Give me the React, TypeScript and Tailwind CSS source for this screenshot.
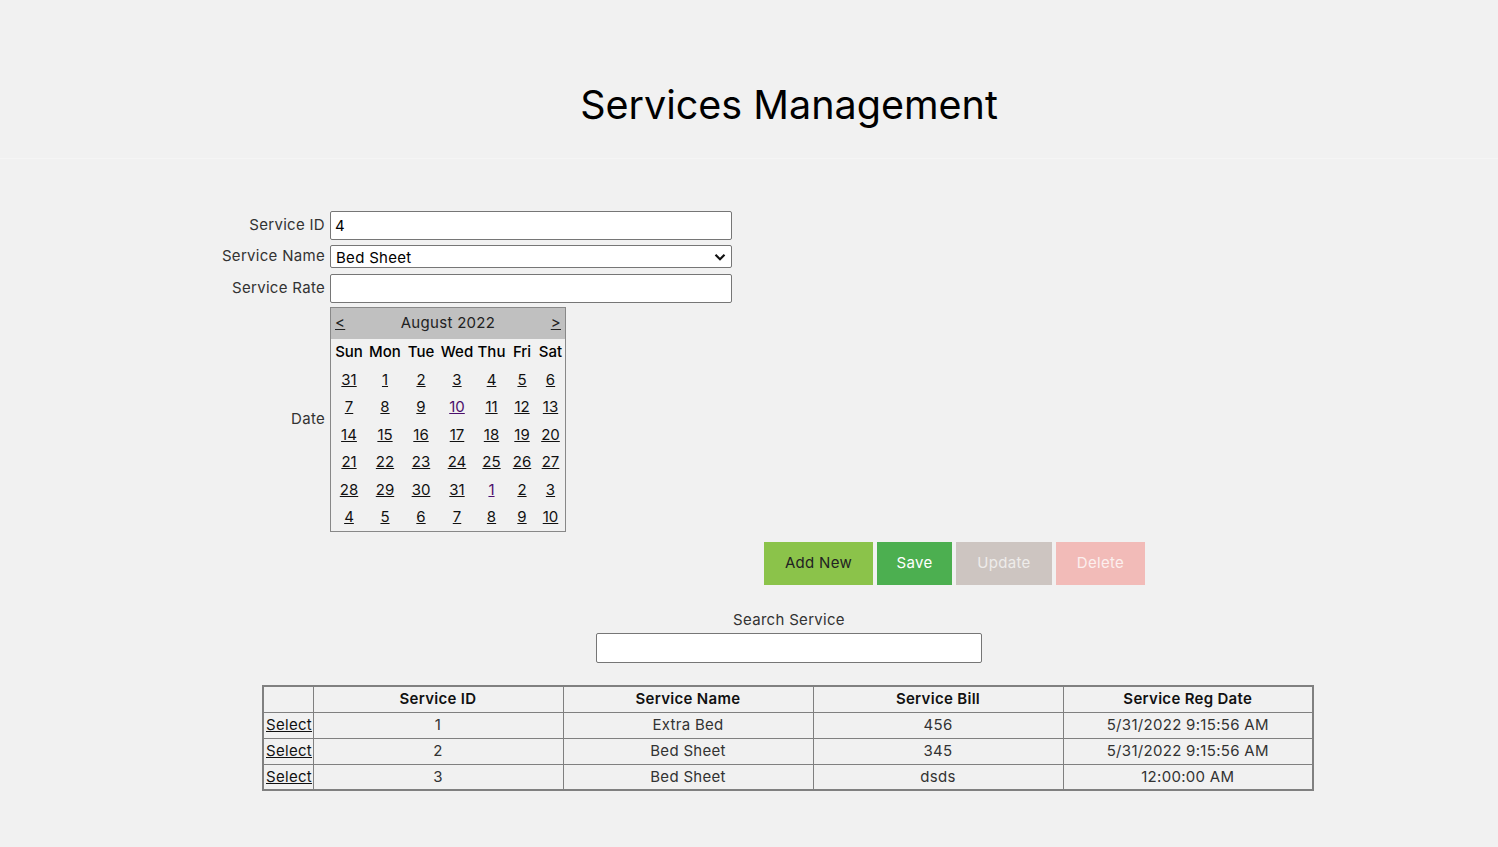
import React from "react";

const days: { d: string; purple?: boolean }[][] = [
  [{ d: "31" }, { d: "1" }, { d: "2" }, { d: "3" }, { d: "4" }, { d: "5" }, { d: "6" }],
  [{ d: "7" }, { d: "8" }, { d: "9" }, { d: "10", purple: true }, { d: "11" }, { d: "12" }, { d: "13" }],
  [{ d: "14" }, { d: "15" }, { d: "16" }, { d: "17" }, { d: "18" }, { d: "19" }, { d: "20" }],
  [{ d: "21" }, { d: "22" }, { d: "23" }, { d: "24" }, { d: "25" }, { d: "26" }, { d: "27" }],
  [{ d: "28" }, { d: "29" }, { d: "30" }, { d: "31" }, { d: "1", purple: true }, { d: "2" }, { d: "3" }],
  [{ d: "4" }, { d: "5" }, { d: "6" }, { d: "7" }, { d: "8" }, { d: "9" }, { d: "10" }],
];

const heads = ["Sun", "Mon", "Tue", "Wed", "Thu", "Fri", "Sat"];

const rows = [
  ["1", "Extra Bed", "456", "5/31/2022 9:15:56 AM"],
  ["2", "Bed Sheet", "345", "5/31/2022 9:15:56 AM"],
  ["3", "Bed Sheet", "dsds", "12:00:00 AM"],
];

function Calendar() {
  return (
    <div className="w-[236px] border border-[#888888] bg-[#f1f1f1]">
      <div className="flex h-[31px] items-center justify-between bg-[#c0c0c0] px-[4px] text-[15px] text-[#222]">
        <span className="underline">&lt;</span>
        <span>August 2022</span>
        <span className="underline">&gt;</span>
      </div>
      <div className="grid grid-cols-[36px_36px_36px_36px_33px_28px_29px] text-[15px] tracking-normal">
        {heads.map((h) => (
          <div key={h} className="flex h-[27px] items-center justify-center font-medium text-black">
            {h}
          </div>
        ))}
        {days.flat().map((c, i) => (
          <div key={i} className="flex h-[27.5px] items-center justify-center">
            <span className={"underline " + (c.purple ? "text-[#4b0f6b]" : "text-[#111]")}>{c.d}</span>
          </div>
        ))}
      </div>
    </div>
  );
}

export default function App() {
  return (
    <div className="min-h-screen bg-[#f1f1f1] font-['Inter',sans-serif] tracking-[0.3px] text-[#333]">
      <header className="h-[159px] border-b border-[#f5f5f5] pl-[80px] text-center">
        <h1 className="pt-[81px] text-[39.5px] font-normal leading-[48px] tracking-normal text-black">
          Services Management
        </h1>
      </header>

      <div className="pl-[80px]">
        <div className="ml-[125px] mt-[52px] grid grid-cols-[120px_402px] gap-x-[5px]">
          <div className="flex items-center justify-end text-[15px]">Service ID</div>
          <input
            readOnly
            value="4"
            className="h-[29px] w-[402px] rounded-[2px] border border-[#767676] bg-white px-[4px] text-[15px] text-black outline-none"
          />

          <div className="mt-[5px] flex items-center justify-end text-[15px]">Service Name</div>
          <div className="relative mt-[5px] h-[23px] w-[402px] rounded-[2px] border border-[#767676] bg-white">
            <span className="absolute left-[5px] top-[1px] text-[15px] text-black">Bed Sheet</span>
            <svg
              className="absolute right-[5px] top-[5px]"
              width="12"
              height="12"
              viewBox="0 0 12 12"
              fill="none"
              stroke="#111"
              strokeWidth="2.2"
            >
              <path d="M1.5 3.8 L6 8.2 L10.5 3.8" />
            </svg>
          </div>

          <div className="mt-[6px] flex items-center justify-end text-[15px]">Service Rate</div>
          <input
            readOnly
            value=""
            className="mt-[6px] h-[29px] w-[402px] rounded-[2px] border border-[#767676] bg-white px-[4px] text-[15px] outline-none"
          />

          <div className="mt-[4px] flex items-center justify-end text-[15px]">Date</div>
          <div className="mt-[4px]">
            <Calendar />
          </div>
        </div>

        <div className="ml-[684px] mt-[10px] flex gap-[4px] text-[15px]">
          <button className="h-[43px] w-[109px] bg-[#8bc34a] text-[#222]">Add New</button>
          <button className="h-[43px] w-[75px] bg-[#4caf50] text-white">Save</button>
          <button className="h-[43px] w-[96px] bg-[#cdc5c1] text-[#eeecea]">Update</button>
          <button className="h-[43px] w-[89px] bg-[#f2bbb8] text-[#fcefee]">Delete</button>
        </div>

        <div className="mt-[25px] flex flex-col items-center">
          <div className="text-[15px] leading-[20px]">Search Service</div>
          <input
            readOnly
            value=""
            className="mt-[3px] h-[30px] w-[386px] rounded-[2px] border border-[#767676] bg-white outline-none"
          />
        </div>

        <div className="mt-[22px] flex justify-center">
          <table className="mr-[2px] w-[1050px] table-fixed border-collapse border-2 border-[#808080] text-[15px]">
            <colgroup>
              <col className="w-[50px]" />
              <col className="w-[250px]" />
              <col className="w-[250px]" />
              <col className="w-[250px]" />
              <col className="w-[250px]" />
            </colgroup>
            <thead>
              <tr className="h-[26px]">
                <th className="border border-[#808080]"></th>
                <th className="border border-[#808080] font-semibold text-[#111]">Service ID</th>
                <th className="border border-[#808080] font-semibold text-[#111]">Service Name</th>
                <th className="border border-[#808080] font-semibold text-[#111]">Service Bill</th>
                <th className="border border-[#808080] font-semibold text-[#111]">Service Reg Date</th>
              </tr>
            </thead>
            <tbody>
              {rows.map((r, i) => (
                <tr key={i} className="h-[26px]">
                  <td className="border border-[#808080] px-[2px] text-left">
                    <span className="text-[#111] underline">Select</span>
                  </td>
                  {r.map((c, j) => (
                    <td key={j} className="border border-[#808080] text-center">
                      {c}
                    </td>
                  ))}
                </tr>
              ))}
            </tbody>
          </table>
        </div>
      </div>
    </div>
  );
}
